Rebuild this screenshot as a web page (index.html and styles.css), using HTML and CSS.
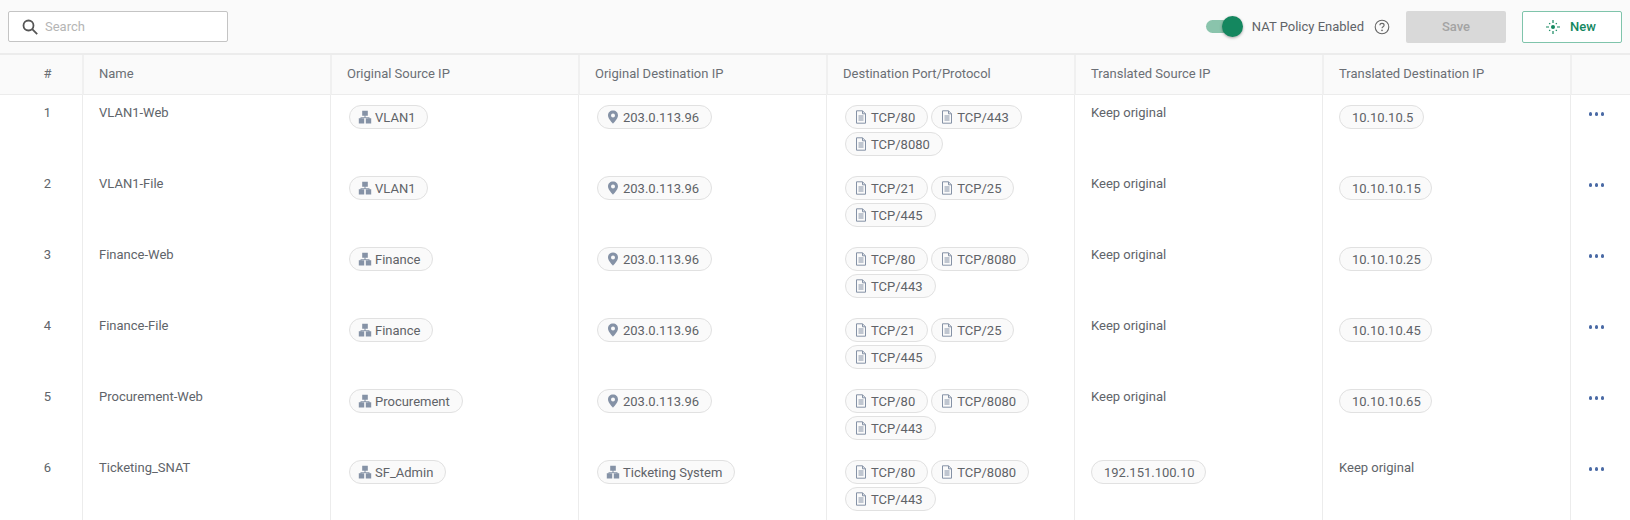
FILE: index.html
```html
<!DOCTYPE html>
<html lang="en">
<head>
  <meta charset="UTF-8" />
  <title>NAT Policy</title>
  <link rel="stylesheet" href="styles.css">
</head>
<body>
  <svg class="defs" width="0" height="0">
    <symbol id="i-net" viewBox="0 0 14 14">
      <path d="M4.200.8h5.600v5h-5.600z M6.500 5.800h1v1.400h4v1h-1V8H7.500v.2h-1V8H3.500v.2h-1V7.200h4z M.8 8.200h5.400v5.300H.8z M7.800 8.200h5.400v5.300H7.800z" />
    </symbol>
    <symbol id="i-pin" viewBox="0 0 14 14">
      <path fill-rule="evenodd" d="M7 .5c-2.900 0-5 2.100-5 4.900C2 8.800 7 13.500 7 13.500s5-4.700 5-8.100C12 2.600 9.900.5 7 .5zm0 3a2 2 0 1 1 0 4 2 2 0 0 1 0-4z" />
    </symbol>
    <symbol id="i-doc" viewBox="0 0 14 14">
      <path class="doc" d="M2.500.8h6l3 3v9.400h-9z M8.500.8v3h3 M4.500 6h5 M4.500 8h5 M4.500 10h5" />
    </symbol>
  </svg>

  <div class="toolbar">
    <label class="search">
      <svg class="search-icon" width="18" height="18" viewBox="0 0 18 18">
        <circle cx="7.500" cy="7.500" r="5" />
        <path d="M11.200 11.200l5 5" />
      </svg>
      <input type="text" placeholder="Search">
    </label>
    <div class="toolbar-right">
      <span class="toggle"><span class="knob"></span></span>
      <span class="toggle-label">NAT Policy Enabled</span>
      <svg class="help" width="16" height="16" viewBox="0 0 16 16">
        <circle cx="8" cy="8" r="6.800" />
        <path d="M5.900 6.300c0-1.200.9-1.900 2.100-1.900s2.100.7 2.100 1.800c0 1.500-2.100 1.600-2.100 3.100" />
        <circle class="help-dot" cx="8" cy="11.400" r=".8" />
      </svg>
      <button class="btn btn-save">Save</button>
      <button class="btn btn-new">
        <svg class="spark" width="16" height="16" viewBox="0 0 16 16">
          <circle class="spark-core" cx="8" cy="8" r="2" />
          <path d="M8 1v3M8 12v3M1 8h3M12 8h3M4.200 4.200l1 1M10.800 10.800l1 1M11.800 4.200l-1 1M5.200 10.800l-1 1" />
        </svg>
        New
      </button>
    </div>
  </div>

  <table class="nat-table">
    <colgroup>
      <col class="col-num"><col><col><col><col><col><col><col class="col-act">
    </colgroup>
    <thead>
      <tr>
        <th class="num">#</th>
        <th>Name</th>
        <th>Original Source IP</th>
        <th>Original Destination IP</th>
        <th>Destination Port/Protocol</th>
        <th>Translated Source IP</th>
        <th>Translated Destination IP</th>
        <th></th>
      </tr>
    </thead>
    <tbody id="rows"></tbody>
  </table>

  <script>
    const rows = [
      ["VLAN1-Web", "VLAN1", ["pin", "203.0.113.96"], ["80", "443", "8080"], null, "10.10.10.5"],
      ["VLAN1-File", "VLAN1", ["pin", "203.0.113.96"], ["21", "25", "445"], null, "10.10.10.15"],
      ["Finance-Web", "Finance", ["pin", "203.0.113.96"], ["80", "8080", "443"], null, "10.10.10.25"],
      ["Finance-File", "Finance", ["pin", "203.0.113.96"], ["21", "25", "445"], null, "10.10.10.45"],
      ["Procurement-Web", "Procurement", ["pin", "203.0.113.96"], ["80", "8080", "443"], null, "10.10.10.65"],
      ["Ticketing_SNAT", "SF_Admin", ["net", "Ticketing System"], ["80", "8080", "443"], "192.151.100.10", null]
    ];

    function chip(icon, text) {
      if (!icon) return `<span class="chip chip-plain">${text}</span>`;
      return `<span class="chip"><svg class="chip-icon" width="14" height="14"><use href="#i-${icon}"></use></svg>${text}</span>`;
    }

    function chipOrKeep(value) {
      return value ? chip(null, value) : `<span class="keep">Keep original</span>`;
    }

    document.getElementById("rows").innerHTML = rows.map((r, i) => `
      <tr>
        <td class="num">${i + 1}</td>
        <td class="text">${r[0]}</td>
        <td>${chip("net", r[1])}</td>
        <td>${chip(r[2][0], r[2][1])}</td>
        <td><div class="chips">${r[3].map(p => chip("doc", "TCP/" + p)).join("")}</div></td>
        <td>${chipOrKeep(r[4])}</td>
        <td>${chipOrKeep(r[5])}</td>
        <td class="actions"><span class="dots"><i></i><i></i><i></i></span></td>
      </tr>`).join("");
  </script>
</body>
</html>
```

FILE: styles.css
```css
html, body {
  margin: 0;
  height: 520px;
  overflow: hidden;
}

body {
  font-family: Roboto, sans-serif;
  font-size: 13px;
  color: #60646a;
  background-color: #fff;
}

.defs {
  display: block;
  height: 0;
}

.toolbar {
  display: flex;
  align-items: center;
  justify-content: space-between;
  height: 53px;
  padding: 0 8px;
  background-color: #fafafa;
  border-bottom: 2px solid #ececec;
}

.search {
  display: flex;
  align-items: center;
  width: 220px;
  height: 31px;
  box-sizing: border-box;
  padding-left: 12px;
  background-color: #fff;
  border: 1px solid #c4c4c4;
  border-radius: 2px;
}

.search-icon {
  fill: none;
  stroke: #555;
  stroke-width: 1.800;
  flex: none;
}

.search input {
  border: 0;
  outline: 0;
  flex: 1;
  min-width: 0;
  margin-left: 6px;
  padding: 0;
  font: 13px Roboto, sans-serif;
  background: transparent;
}

.search input::placeholder {
  color: #b5b5b5;
}

.toolbar-right {
  display: flex;
  align-items: center;
}

.toggle {
  display: block;
  position: relative;
  width: 34px;
  height: 13px;
  margin-right: 12px;
  border-radius: 7px;
  background-color: #8ac4ac;
}

.knob {
  position: absolute;
  top: -4px;
  right: -3px;
  width: 21px;
  height: 21px;
  border-radius: 50%;
  background-color: #14875f;
  box-shadow: 0 1px 3px rgba(0, 0, 0, .35);
}

.toggle-label {
  color: #5f6368;
}

.help {
  margin-left: 10px;
  fill: none;
  stroke: #666;
  stroke-width: 1.100;
}

.help-dot {
  fill: #666;
  stroke: none;
}

.btn {
  display: flex;
  align-items: center;
  justify-content: center;
  width: 100px;
  height: 32px;
  padding: 0;
  border-radius: 2px;
  font: 500 13px Roboto, sans-serif;
}

.btn-save {
  margin-left: 16px;
  background-color: #d9d9d9;
  border: 0;
  color: #a3a3a3;
}

.btn-new {
  margin-left: 16px;
  background-color: #fff;
  border: 1px solid #7fc4ab;
  color: #14875f;
}

.spark {
  margin-right: 9px;
  margin-left: -3px;
  fill: none;
  stroke: #14875f;
  stroke-width: 1.200;
}

.spark-core {
  fill: #14875f;
  stroke: none;
}

.nat-table {
  width: 100%;
  table-layout: fixed;
  border-collapse: separate;
  border-spacing: 0;
}

.col-num {
  width: 82px;
}

.col-act {
  width: 60px;
}

.nat-table th {
  height: 40px;
  padding: 0 15px 2px;
  box-sizing: border-box;
  font-weight: 400;
  text-align: left;
  color: #6b6f75;
  background-color: #fafafa;
  border-left: 2px solid #f0f0f0;
  border-bottom: 1px solid #ececec;
}

.nat-table th:first-child, .nat-table td:first-child {
  border-left: 0;
}

.nat-table td {
  height: 71px;
  padding: 10px 16px 0;
  box-sizing: border-box;
  vertical-align: top;
  border-left: 1px solid #ececec;
}

.nat-table .num {
  padding-left: 13px;
  padding-right: 0;
  text-align: center;
}

td.num, td.text {
  line-height: 15px;
}

.keep {
  display: block;
  line-height: 15px;
}

.chips {
  display: flex;
  flex-wrap: wrap;
  gap: 3px;
}

.chip {
  display: inline-flex;
  align-items: center;
  height: 24px;
  box-sizing: border-box;
  padding: 0 12px 0 8px;
  margin-left: 2px;
  border: 1px solid #e1e1e1;
  border-radius: 12px;
  background-color: #fafafa;
  color: #5f6368;
  white-space: nowrap;
}

.chips .chip {
  margin-left: 0;
}

.chips .chip:first-child, .chips .chip:last-child {
  margin-left: 2px;
}

.chip-plain {
  margin-left: 0;
  padding: 0 10px 0 12px;
}

.chip-icon {
  margin-right: 3px;
  fill: #8592a6;
}

.doc {
  fill: none;
  stroke: #8592a6;
  stroke-width: 1;
}

.actions {
  text-align: center;
}

.nat-table .actions {
  padding: 10px 8px 0 0;
}

.dots {
  display: flex;
  justify-content: center;
  gap: 2.500px;
  padding-top: 7px;
}

.dots i {
  width: 3.500px;
  height: 3.500px;
  border-radius: 50%;
  background-color: #4a6aa5;
}
```
